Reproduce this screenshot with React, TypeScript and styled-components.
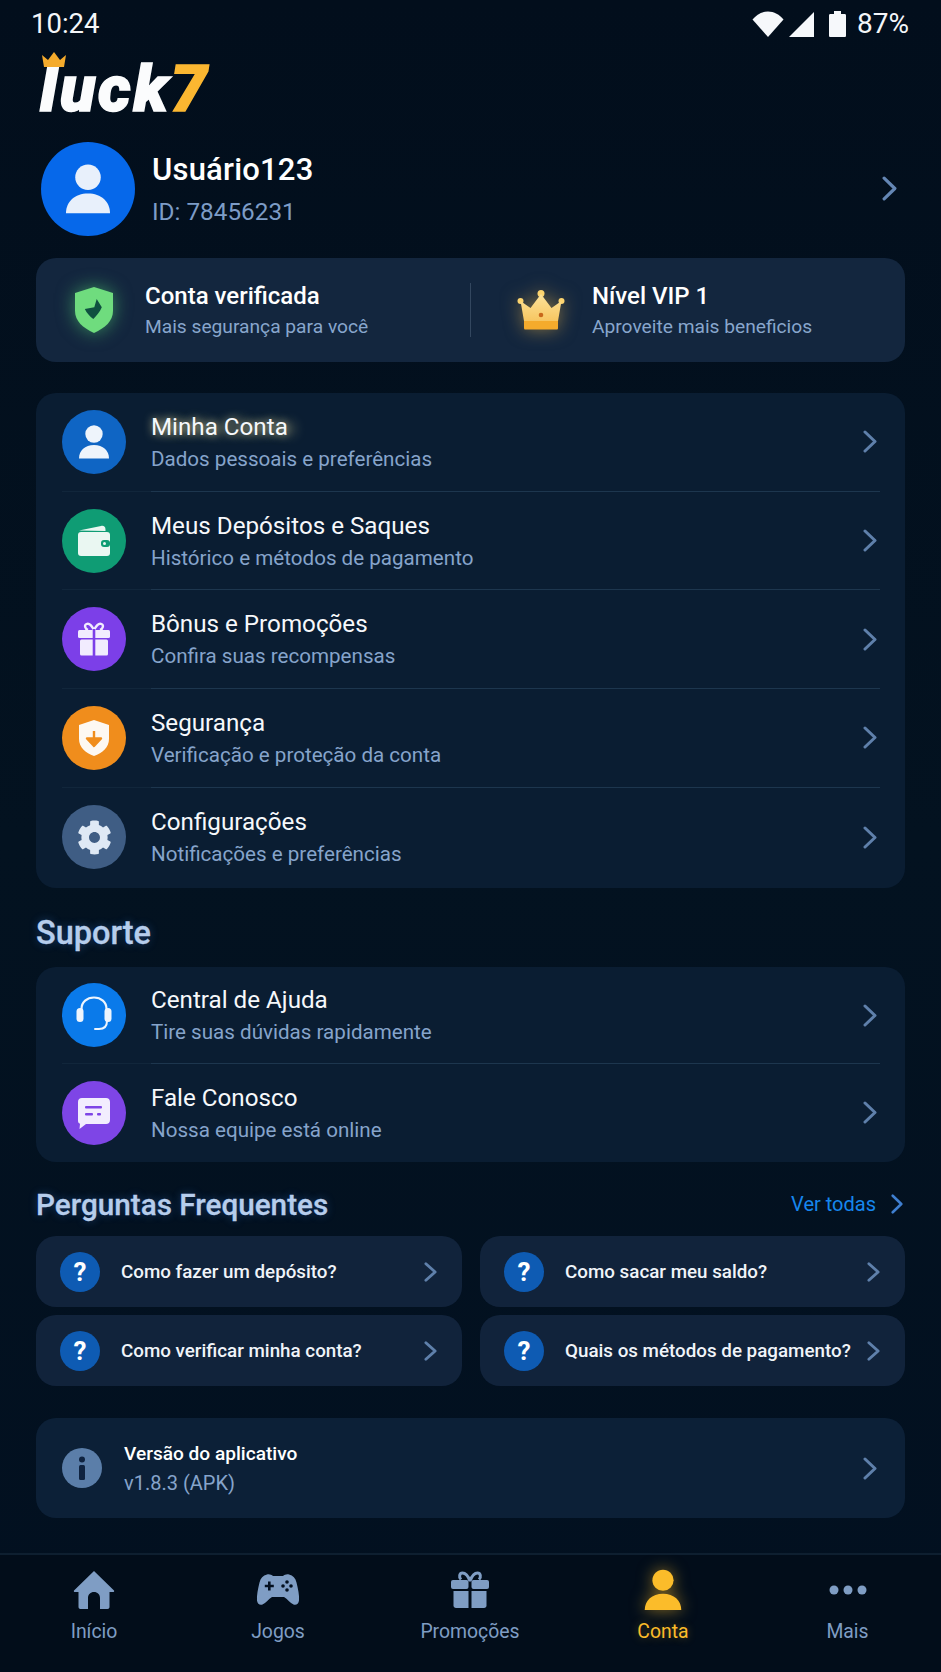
import React from "react";
import styled, { createGlobalStyle } from "styled-components";
import { FaCog } from "react-icons/fa";

const GlobalStyle = createGlobalStyle`
  html, body {
    margin: 0;
    padding: 0;
    background: #020e1c;
  }
  * {
    box-sizing: border-box;
  }
`;

const Page = styled.div`
  width: 941px;
  height: 1672px;
  overflow: hidden;
  display: flex;
  flex-direction: column;
  font-family: Roboto, "Liberation Sans", sans-serif;
  color: #fff;
  background: linear-gradient(180deg, #020e1c 0%, #031220 50%, #021020 100%);
`;

const StatusBar = styled.div`
  height: 46px;
  flex: none;
  display: flex;
  align-items: center;
  justify-content: space-between;
  padding: 2px 32px 0 31px;
  font-size: 27.5px;
  line-height: 44px;
  color: #f4f6f9;
`;

const StatusIcons = styled.div`
  display: flex;
  align-items: center;
  gap: 5px;
  font-size: 28px;
`;

const BatteryGap = styled.span`
  display: flex;
  margin: 0 6px 0 10px;
`;

const Logo = styled.div`
  position: relative;
  flex: none;
  height: 60px;
  margin: 7px 0 0 40px;
  font-size: 65px;
  line-height: 72px;
  font-weight: 900;
  font-style: italic;
  letter-spacing: 2.6px;
  color: #fbfcfd;
  -webkit-text-stroke: 1.5px currentColor;
`;

const LogoSeven = styled.span`
  color: #fbb731;
`;

const LogoCrown = styled.svg`
  position: absolute;
  left: 2px;
  top: -1px;
`;

const Profile = styled.div`
  flex: none;
  display: flex;
  align-items: center;
  height: 95px;
  margin: 28px 36px 0 41px;
  padding-right: 8px;
`;

const Avatar = styled.div`
  width: 94px;
  height: 94px;
  border-radius: 50%;
  background: #0668ea;
  display: flex;
  align-items: center;
  justify-content: center;
  color: #e8f0fb;
`;

const ProfileText = styled.div`
  flex: 1;
  margin-left: 17px;
`;

const ProfileName = styled.div`
  font-size: 31px;
  line-height: 38px;
  font-weight: 500;
  letter-spacing: 0.2px;
`;

const ProfileId = styled.div`
  margin-top: 8px;
  font-size: 24.3px;
  line-height: 30px;
  color: #7d9cc6;
`;

const StatCard = styled.div`
  flex: none;
  display: flex;
  align-items: center;
  height: 104px;
  margin: 22px 36px 0;
  border-radius: 20px;
  background: #13263e;
`;

const StatItem = styled.div<{ $pad: number }>`
  flex: 0 0 auto;
  width: ${(p) => (p.$pad === 34 ? "434px" : "auto")};
  display: flex;
  align-items: center;
  gap: 27px;
  padding-left: ${(p) => p.$pad}px;
`;

const StatDivider = styled.div`
  width: 1px;
  height: 54px;
  background: #33475f;
`;

const StatIcon = styled.div<{ $glow: string }>`
  width: 48px;
  display: flex;
  justify-content: center;
  filter: drop-shadow(0 0 9px ${(p) => p.$glow});
`;

const StatTitle = styled.div`
  font-size: 24px;
  line-height: 30px;
  font-weight: 500;
`;

const StatSub = styled.div`
  margin-top: 3px;
  font-size: 19.2px;
  line-height: 26px;
  color: #88a6cd;
`;

const Card = styled.div<{ $top: number; $bottom: number }>`
  flex: none;
  margin: ${(p) => p.$top}px 36px 0;
  padding: 0 25px ${(p) => p.$bottom}px 26px;
  border-radius: 20px;
  background: #0a1d32;
`;

const Row = styled.div<{ $h: number }>`
  height: ${(p) => p.$h}px;
  display: flex;
  align-items: center;
  gap: 25px;
  padding-right: 3px;
  border-bottom: 1px solid;
  border-image: linear-gradient(90deg, #11263b 11%, #1d364e 11%) 1;

  &:last-child {
    border-bottom: 0;
  }
`;

const CircleIcon = styled.div<{ $bg: string }>`
  width: 64px;
  height: 64px;
  flex: none;
  border-radius: 50%;
  background: ${(p) => p.$bg};
  display: flex;
  align-items: center;
  justify-content: center;
  color: #eef4fb;
`;

const RowText = styled.div`
  flex: 1;
`;

const RowTitle = styled.div<{ $glow?: boolean }>`
  font-size: 24.2px;
  line-height: 30px;
  color: #f6f8fb;
  text-shadow: ${(p) =>
    p.$glow ? "0 0 9px rgba(245, 235, 165, 0.75), 8px 0 12px rgba(245, 235, 165, 0.4)" : "none"};
`;

const RowSub = styled.div`
  margin-top: 4px;
  font-size: 20.6px;
  line-height: 26px;
  color: #86a4cb;
`;

const SectionHead = styled.div<{ $top: number; $bottom: number }>`
  flex: none;
  display: flex;
  align-items: center;
  justify-content: space-between;
  height: 36px;
  margin: ${(p) => p.$top}px 38px ${(p) => p.$bottom}px 36px;
`;

const SectionTitle = styled.div<{ $size: number }>`
  font-size: ${(p) => p.$size}px;
  font-weight: 500;
  color: #b6cdec;
  -webkit-text-stroke: 0.3px currentColor;
  text-shadow: 0 0 8px rgba(66, 130, 225, 0.38);
`;

const SeeAll = styled.div`
  display: flex;
  align-items: center;
  gap: 15px;
  font-size: 20px;
  color: #1686ee;
`;

const FaqGrid = styled.div`
  flex: none;
  display: grid;
  grid-template-columns: 426px 425px;
  grid-auto-rows: 71px;
  gap: 8px 18px;
  margin: 0 36px;
`;

const FaqItem = styled.div`
  display: flex;
  align-items: center;
  padding: 0 25px 0 24px;
  border-radius: 20px;
  background: #11233b;
`;

const FaqMark = styled.div`
  width: 40px;
  height: 40px;
  flex: none;
  border-radius: 50%;
  background: #0e5bb3;
  display: flex;
  align-items: center;
  justify-content: center;
  font-size: 26px;
  font-weight: 700;
`;

const FaqText = styled.div`
  flex: 1;
  margin-left: 21px;
  font-size: 18.8px;
  font-weight: 500;
  color: #f0f4f9;
  white-space: nowrap;
`;

const VersionCard = styled.div`
  flex: none;
  display: flex;
  align-items: center;
  height: 100px;
  margin: 32px 36px 0;
  padding: 0 28px 0 26px;
  border-radius: 20px;
  background: #0c2037;
`;

const InfoMark = styled.div`
  width: 40px;
  height: 40px;
  flex: none;
  border-radius: 50%;
  background: #5b7ea9;
  display: flex;
  align-items: center;
  justify-content: center;
`;

const VersionText = styled.div`
  flex: 1;
  margin-left: 22px;
`;

const VersionTitle = styled.div`
  font-size: 19.1px;
  line-height: 26px;
  font-weight: 500;
`;

const VersionSub = styled.div`
  margin-top: 3px;
  font-size: 20px;
  line-height: 26px;
  color: #86a4cb;
`;

const BottomNav = styled.nav`
  margin-top: auto;
  height: 119px;
  flex: none;
  display: grid;
  grid-template-columns: 188px 180px 204px 182px 1fr;
  border-top: 2px solid #0e1f30;
  background: #020d1a;
`;

const NavItem = styled.div<{ $active?: boolean }>`
  display: flex;
  flex-direction: column;
  align-items: center;
  padding-top: 14px;
  font-size: 19.4px;
  color: ${(p) => (p.$active ? "#fbbc2a" : "#7f9dc4")};
  text-shadow: ${(p) => (p.$active ? "0 0 8px rgba(251, 188, 42, 0.35)" : "none")};
`;

const NavGlyph = styled.div<{ $active?: boolean }>`
  height: 42px;
  display: flex;
  align-items: center;
  justify-content: center;
  filter: ${(p) => (p.$active ? "drop-shadow(0 0 8px rgba(251, 188, 42, 0.55))" : "none")};
`;

const NavLabel = styled.div`
  margin-top: 8px;
  line-height: 26px;
`;

function Chevron({ w = 14, h = 23, color = "#5f80ab" }: { w?: number; h?: number; color?: string }) {
  return (
    <svg width={w} height={h} viewBox="0 0 14 23" fill="none" preserveAspectRatio="none">
      <path d="M2 2l10 9.5L2 21" stroke={color} strokeWidth="3" strokeLinecap="round" strokeLinejoin="round" />
    </svg>
  );
}

function PersonGlyph({ size = 64 }: { size?: number }) {
  return (
    <svg width={size} height={size} viewBox="0 0 64 64" fill="currentColor">
      <circle cx="32" cy="24" r="8.7" />
      <path d="M17 48.5c0-8 6-13.500 15-13.500s15 5.500 15 13.500z" />
    </svg>
  );
}

function WalletGlyph() {
  return (
    <svg width="64" height="64" viewBox="0 0 64 64">
      <path d="M17 21.500l22-4.500c2.800-.6 4.500.8 4.500 3.500v1.500z" fill="#eaf7f2" />
      <rect x="16" y="23" width="32" height="24" rx="3" fill="#eaf7f2" />
      <rect x="39" y="31" width="9" height="7" rx="3" fill="#0f9c74" />
      <circle cx="42.500" cy="34.500" r="1.500" fill="#eaf7f2" />
    </svg>
  );
}

function GiftGlyph({ size = 64, color = "#f1ecfe", cut = "#7c3fe8" }: { size?: number; color?: string; cut?: string }) {
  return (
    <svg width={size} height={size} viewBox="0 0 64 64">
      <path
        d="M32 23c-2-4-5-7-7.500-6s-1.500 5 1.500 6M32 23c2-4 5-7 7.500-6s1.500 5-1.500 6"
        fill="none"
        stroke={color}
        strokeWidth="2.400"
      />
      <rect x="16" y="23" width="32" height="8" rx="1.500" fill={color} />
      <rect x="18" y="32.500" width="28" height="16" rx="1.500" fill={color} />
      <rect x="30.700" y="22" width="2.600" height="28" fill={cut} />
    </svg>
  );
}

function ShieldDownGlyph() {
  return (
    <svg width="64" height="64" viewBox="0 0 64 64">
      <path
        d="M32 14l15 5v14c0 8.500-6.500 14-15 17-8.500-3-15-8.500-15-17V19z"
        fill="#fdf8f2"
      />
      <path d="M32 25v10M25 32.500h14L32 40z" fill="#f08d1c" stroke="#f08d1c" strokeWidth="2.400" strokeLinejoin="round" />
    </svg>
  );
}

function HeadsetGlyph() {
  return (
    <svg width="64" height="64" viewBox="0 0 64 64" fill="none">
      <path d="M19.500 27v-1c0-7 5.500-11.500 12.500-11.500S44.500 19 44.500 26v1" stroke="#eef5fd" strokeWidth="2.200" />
      <rect x="14.500" y="25" width="7" height="14" rx="3.500" fill="#eef5fd" />
      <rect x="42.500" y="25" width="7" height="14" rx="3.500" fill="#eef5fd" />
      <path d="M45 38c0 5.500-3.500 8-8 8h-4" stroke="#eef5fd" strokeWidth="2" strokeLinecap="round" />
    </svg>
  );
}

function ChatGlyph() {
  return (
    <svg width="64" height="64" viewBox="0 0 64 64">
      <path
        d="M20 17h24c2.500 0 4 1.500 4 4v18c0 2.500-1.500 4-4 4H24l-6.500 5 .5-5.200c-1.300-.5-2-1.500-2-3.300V21c0-2.500 1.500-4 4-4z"
        fill="#f2edfe"
      />
      <rect x="23" y="25" width="17" height="2.400" rx="1" fill="#7e45e6" />
      <rect x="23" y="32" width="8" height="2.400" rx="1" fill="#7e45e6" />
      <rect x="35" y="32" width="4" height="2.400" rx="1" fill="#7e45e6" />
    </svg>
  );
}

function HomeGlyph() {
  return (
    <svg width="42" height="40" viewBox="0 0 42 40" fill="currentColor">
      <path d="M21 1L41 20.500c.5.8 0 1.500-.8 1.500H36.500v15c0 1.200-.8 2-2 2H27V28c0-3.500-2.500-6-6-6s-6 2.500-6 6v11H7.500c-1.200 0-2-.8-2-2V22H1.800c-.8 0-1.300-.7-.8-1.500z" />
    </svg>
  );
}

function GamepadGlyph() {
  return (
    <svg width="44" height="34" viewBox="0 0 44 34">
      <path
        fill="currentColor"
        d="M11 1.500c2.500-.7 4.500.5 6 1.500h10c1.500-1 3.500-2.200 6-1.500 4 1 6.500 3.500 7.500 8 1.500 6 3 13 2.500 18-.3 3.500-3 5-5.500 4-3.500-1.500-6-5.500-9.500-7.500H16c-3.500 2-6 6-9.500 7.500-2.500 1-5.200-.5-5.500-4-.5-5 1-12 2.500-18 1-4.500 3.500-7 7.500-8z"
      />
      <path d="M12 8.500h2.600v3.200h3.200v2.600h-3.200v3.200H12v-3.200H8.800v-2.600H12z" fill="#041020" />
      <circle cx="31" cy="9" r="1.800" fill="#041020" />
      <circle cx="31" cy="17" r="1.800" fill="#041020" />
      <circle cx="27" cy="13" r="1.800" fill="#041020" />
      <circle cx="35" cy="13" r="1.800" fill="#041020" />
    </svg>
  );
}

function NavGiftGlyph() {
  return (
    <svg width="40" height="38" viewBox="0 0 40 38" fill="currentColor">
      <path
        d="M20 10c-1.500-4-4-8-7.500-8-3 0-4 4-1.500 6.500M20 10c1.500-4 4-8 7.500-8 3 0 4 4 1.500 6.500"
        fill="none"
        stroke="currentColor"
        strokeWidth="3"
      />
      <rect x="1" y="9" width="17.500" height="9" rx="2" />
      <rect x="21.500" y="9" width="17.500" height="9" rx="2" />
      <path d="M3.500 20h15v17h-12.500c-1.500 0-2.500-1-2.500-2.500z" />
      <path d="M21.500 20h15v14.500c0 1.500-1 2.500-2.500 2.500h-12.500z" />
    </svg>
  );
}

function DotsGlyph() {
  return (
    <svg width="38" height="10" viewBox="0 0 38 10" fill="currentColor">
      <circle cx="5" cy="5" r="4.500" />
      <circle cx="19" cy="5" r="4.500" />
      <circle cx="33" cy="5" r="4.500" />
    </svg>
  );
}

const menuRows = [
  { title: "Minha Conta", sub: "Dados pessoais e preferências", bg: "#0f65c4", icon: <PersonGlyph />, glow: true },
  { title: "Meus Depósitos e Saques", sub: "Histórico e métodos de pagamento", bg: "#0f9c74", icon: <WalletGlyph /> },
  { title: "Bônus e Promoções", sub: "Confira suas recompensas", bg: "#7c3fe8", icon: <GiftGlyph /> },
  { title: "Segurança", sub: "Verificação e proteção da conta", bg: "#f08d1c", icon: <ShieldDownGlyph /> },
  { title: "Configurações", sub: "Notificações e preferências", bg: "#3f5d84", icon: <FaCog size={35} color="#dfe9f5" /> },
];

const supportRows = [
  { title: "Central de Ajuda", sub: "Tire suas dúvidas rapidamente", bg: "#0a7aea", icon: <HeadsetGlyph /> },
  { title: "Fale Conosco", sub: "Nossa equipe está online", bg: "#7e45e6", icon: <ChatGlyph /> },
];

const faqs = [
  "Como fazer um depósito?",
  "Como sacar meu saldo?",
  "Como verificar minha conta?",
  "Quais os métodos de pagamento?",
];

const navItems = [
  { label: "Início", icon: <HomeGlyph /> },
  { label: "Jogos", icon: <GamepadGlyph /> },
  { label: "Promoções", icon: <NavGiftGlyph /> },
  { label: "Conta", icon: <PersonGlyph size={78} />, active: true },
  { label: "Mais", icon: <DotsGlyph /> },
];

export default function App() {
  return (
    <Page>
      <GlobalStyle />
      <StatusBar>
        <span>10:24</span>
        <StatusIcons>
          <svg width="32" height="26" viewBox="0 0 32 26" fill="#f6f8fb">
            <path d="M16 26L.5 8.500C4.500 3.500 10 .5 16 .5s11.500 3 15.500 8z" />
          </svg>
          <svg width="25" height="25" viewBox="0 0 25 25" fill="#f6f8fb">
            <path d="M25 0v25H0z" />
          </svg>
          <BatteryGap>
            <svg width="17" height="26" viewBox="0 0 17 26" fill="#f6f8fb">
              <path d="M5 0h7v3h3.500c1 0 1.500.5 1.500 1.500V24.500c0 1-.5 1.500-1.500 1.500h-14C.5 26 0 25.500 0 24.500V4.500C0 3.500.5 3 1.500 3H5z" />
            </svg>
          </BatteryGap>
          <span>87%</span>
        </StatusIcons>
      </StatusBar>

      <Logo>
        luck<LogoSeven>7</LogoSeven>
        <LogoCrown width="24" height="16" viewBox="0 0 24 16" fill="#f5ab2c">
          <path d="M2 15L0 3l6 5 6-8 6 8 6-5-2 12z" />
        </LogoCrown>
      </Logo>

      <Profile>
        <Avatar>
          <PersonGlyph size={94} />
        </Avatar>
        <ProfileText>
          <ProfileName>Usuário123</ProfileName>
          <ProfileId>ID: 78456231</ProfileId>
        </ProfileText>
        <Chevron w={15} h={25} color="#6486b4" />
      </Profile>

      <StatCard>
        <StatItem $pad={34}>
          <StatIcon $glow="rgba(90, 225, 120, 0.55)">
            <svg width="40" height="46" viewBox="0 0 40 46">
              <path d="M20 0l19 6v18c0 10-8 17-19 22C9 41 1 34 1 24V6z" fill="#6fdc7e" />
              <path d="M22.700 12l5.100 8.300c-2 5-5.500 8.500-8.500 11.700-3.500-2.500-6.500-6-8.500-10l9.500-1.700z" fill="#0f5040" />
            </svg>
          </StatIcon>
          <div>
            <StatTitle>Conta verificada</StatTitle>
            <StatSub>Mais segurança para você</StatSub>
          </div>
        </StatItem>
        <StatDivider />
        <StatItem $pad={46}>
          <StatIcon $glow="rgba(250, 190, 70, 0.5)">
            <svg width="48" height="40" viewBox="0 0 48 40">
              <defs>
                <linearGradient id="crownFill" x1="0" y1="0" x2="0" y2="1">
                  <stop offset="0" stopColor="#fde39a" />
                  <stop offset="1" stopColor="#f7c661" />
                </linearGradient>
              </defs>
              <circle cx="3.500" cy="11" r="3" fill="#fcd46f" />
              <circle cx="24" cy="3.500" r="3.500" fill="#fcd46f" />
              <circle cx="44.500" cy="11" r="3" fill="#fcd46f" />
              <path d="M7 31L3.500 11l10 7L24 4l10.500 14 10-7L41 31z" fill="url(#crownFill)" />
              <path d="M7 31h34v7c0 1-.5 1.500-1.500 1.500h-31C7.500 39.500 7 39 7 38z" fill="#f5ab2c" />
              <circle cx="24" cy="25" r="2.300" fill="#c9681b" />
            </svg>
          </StatIcon>
          <div>
            <StatTitle>Nível VIP 1</StatTitle>
            <StatSub>Aproveite mais beneficios</StatSub>
          </div>
        </StatItem>
      </StatCard>

      <Card $top={31} $bottom={2}>
        {menuRows.map((row) => (
          <Row key={row.title} $h={98.7}>
            <CircleIcon $bg={row.bg}>{row.icon}</CircleIcon>
            <RowText>
              <RowTitle $glow={row.glow}>{row.title}</RowTitle>
              <RowSub>{row.sub}</RowSub>
            </RowText>
            <Chevron />
          </Row>
        ))}
      </Card>

      <SectionHead $top={27} $bottom={16}>
        <SectionTitle $size={32.500}>Suporte</SectionTitle>
      </SectionHead>

      <Card $top={0} $bottom={1}>
        {supportRows.map((row) => (
          <Row key={row.title} $h={97}>
            <CircleIcon $bg={row.bg}>{row.icon}</CircleIcon>
            <RowText>
              <RowTitle>{row.title}</RowTitle>
              <RowSub>{row.sub}</RowSub>
            </RowText>
            <Chevron />
          </Row>
        ))}
      </Card>

      <SectionHead $top={24} $bottom={14}>
        <SectionTitle $size={29.7}>Perguntas Frequentes</SectionTitle>
        <SeeAll>
          Ver todas
          <Chevron w={12} h={20} color="#3f7fd0" />
        </SeeAll>
      </SectionHead>

      <FaqGrid>
        {faqs.map((faq) => (
          <FaqItem key={faq}>
            <FaqMark>?</FaqMark>
            <FaqText>{faq}</FaqText>
            <Chevron w={13} h={20} color="#5f80ab" />
          </FaqItem>
        ))}
      </FaqGrid>

      <VersionCard>
        <InfoMark>
          <svg width="8" height="24" viewBox="0 0 8 24" fill="#0f2340">
            <circle cx="4" cy="3.500" r="3" />
            <rect x="1" y="9" width="6" height="15" rx="1.500" />
          </svg>
        </InfoMark>
        <VersionText>
          <VersionTitle>Versão do aplicativo</VersionTitle>
          <VersionSub>v1.8.3 (APK)</VersionSub>
        </VersionText>
        <Chevron />
      </VersionCard>

      <BottomNav>
        {navItems.map((item) => (
          <NavItem key={item.label} $active={item.active}>
            <NavGlyph $active={item.active}>{item.icon}</NavGlyph>
            <NavLabel>{item.label}</NavLabel>
          </NavItem>
        ))}
      </BottomNav>
    </Page>
  );
}
